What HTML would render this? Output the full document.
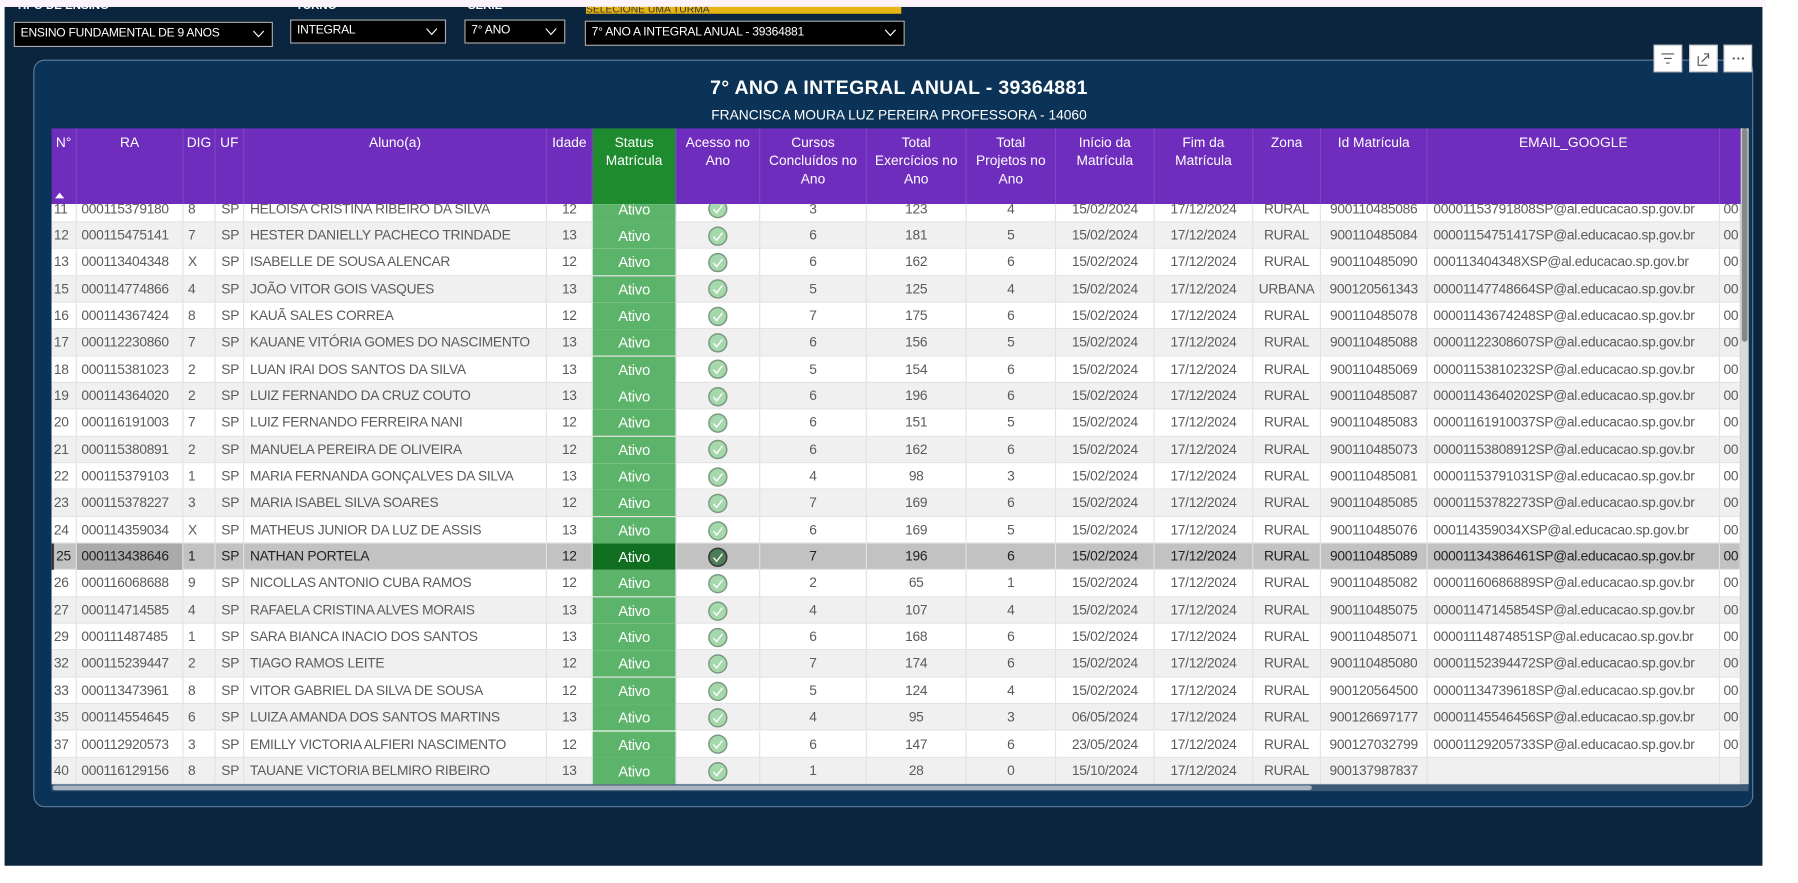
<!DOCTYPE html>
<html><head><meta charset="utf-8">
<style>
html,body{margin:0;padding:0;width:1798px;height:883px;overflow:hidden;background:#fff;}
#w{position:absolute;left:0;top:0;width:1568px;height:770px;transform:scale(1.14668);transform-origin:0 0;font-family:"Liberation Sans",sans-serif;}
.bg{position:absolute;left:4px;top:6px;width:1533px;height:749px;background:#0b253f;}
.topstrip{position:absolute;left:0;top:0;width:1540px;height:6px;background:#fcf4fa;}
.lbl{position:absolute;top:0px;color:#fff;font-size:10px;font-weight:bold;line-height:12px;}
.sl{position:absolute;background:#000;border:1px solid #aaa;color:#fff;font-size:10.5px;box-sizing:border-box;padding:3px 5px;white-space:nowrap;letter-spacing:-0.2px;}
.sl svg{position:absolute;right:6px;top:6px;}
.panel{position:absolute;left:29px;top:52px;width:1500px;height:652px;background:#0b3357;border:1.5px solid #5d7d9c;border-radius:10px;box-sizing:border-box;}
.ib{position:absolute;top:39px;width:25px;height:24px;background:#fff;border:1px solid #ccc;box-sizing:border-box;}
.t1{position:absolute;left:0;width:1568px;top:67px;text-align:center;color:#fff;font-size:17px;font-weight:bold;letter-spacing:0.3px;}
.t2{position:absolute;left:0;width:1568px;top:93px;text-align:center;color:#fff;font-size:12px;}
.hdr{position:absolute;left:45px;top:112px;height:66px;width:1473px;background:#6f2dbd;}
.hc{position:absolute;top:0;height:66px;color:#fff;font-size:12px;text-align:center;line-height:16px;padding-top:4px;box-sizing:border-box;border-right:1px solid #7d46c5;}
.body{position:absolute;left:45px;top:178px;width:1473px;height:506px;overflow:hidden;background:#fff;}
.row{position:absolute;left:0;width:1473px;height:23.35px;border-bottom:1px solid #e3e3e3;box-sizing:border-box;}
.c{position:absolute;top:0;height:23px;line-height:23px;font-size:12px;color:#5a5a5a;white-space:nowrap;overflow:hidden;letter-spacing:-0.25px;border-right:1px solid #e2e2e2;box-sizing:border-box;}
.ctr{text-align:center;}
.st{background:#5cb36a;color:#fff;text-align:center;font-size:13px;}
.vs{position:absolute;left:1518px;top:112px;width:7px;height:572px;background:#d9d9d9;}
.vs div{position:absolute;left:1px;top:0;width:5px;height:186px;background:#888;border-radius:3px;}
.hs{position:absolute;left:45px;top:684px;width:1480px;height:6px;background:#3d5a76;}
.hs div{position:absolute;left:1px;top:1px;width:1098px;height:4px;background:#a8b4c0;border-radius:2px;}
</style></head><body><div id="w">
<div class="bg"></div>
<div class="lbl" style="left:14px">TIPO DE ENSINO</div>
<div class="lbl" style="left:258px">TURNO</div>
<div class="lbl" style="left:408px">SERIE</div>
<div class="topstrip"></div>
<div style="position:absolute;left:511px;top:6px;width:275px;height:6px;background:#e8b614;overflow:hidden;font-size:9px;line-height:4px;color:#333">SELECIONE UMA TURMA</div>
<div class="sl" style="left:12px;top:19px;width:226px;height:22px">ENSINO FUNDAMENTAL DE 9 ANOS<svg width="11" height="7"><path d="M1 1L5.5 6L10 1" stroke="#fff" fill="none"/></svg></div>
<div class="sl" style="left:253px;top:17px;width:136px;height:21px;padding-top:2px">INTEGRAL<svg width="11" height="7"><path d="M1 1L5.5 6L10 1" stroke="#fff" fill="none"/></svg></div>
<div class="sl" style="left:405px;top:17px;width:88px;height:21px;padding-top:2px">7° ANO<svg width="11" height="7"><path d="M1 1L5.5 6L10 1" stroke="#fff" fill="none"/></svg></div>
<div class="sl" style="left:510px;top:18px;width:279px;height:22px">7° ANO A INTEGRAL ANUAL - 39364881<svg width="11" height="7"><path d="M1 1L5.5 6L10 1" stroke="#fff" fill="none"/></svg></div>
<div class="panel"></div>
<div class="ib" style="left:1442px"><svg width="23" height="22"><path d="M6 7h11M8 11h7M10 15h3" stroke="#555" stroke-width="1"/></svg></div>
<div class="ib" style="left:1473px"><svg width="23" height="22"><path d="M7 9v8h8M10 14l6-6M12 7h4v4" stroke="#555" fill="none"/></svg></div>
<div class="ib" style="left:1503px"><svg width="23" height="22"><circle cx="8" cy="11" r="1" fill="#555"/><circle cx="12" cy="11" r="1" fill="#555"/><circle cx="16" cy="11" r="1" fill="#555"/></svg></div>
<div class="t1">7° ANO A INTEGRAL ANUAL - 39364881</div>
<div class="t2">FRANCISCA MOURA LUZ PEREIRA PROFESSORA - 14060</div>
<div class="hdr">
<div class="hc" style="left:0;width:22px">N°<div style="position:absolute;left:3px;top:56px;width:0;height:0;border-left:4px solid transparent;border-right:4px solid transparent;border-bottom:5px solid #fff"></div></div>
<div class="hc" style="left:22px;width:93px">RA</div>
<div class="hc" style="left:115px;width:28px">DIG</div>
<div class="hc" style="left:143px;width:25px;text-align:left;padding-left:4px">UF</div>
<div class="hc" style="left:168px;width:264px">Aluno(a)</div>
<div class="hc" style="left:432px;width:40px">Idade</div>
<div class="hc" style="left:472px;width:73px;background:#1e8c2e">Status<br>Matrícula</div>
<div class="hc" style="left:545px;width:73px">Acesso no<br>Ano</div>
<div class="hc" style="left:618px;width:93px">Cursos<br>Concluídos no<br>Ano</div>
<div class="hc" style="left:711px;width:87px">Total<br>Exercícios no<br>Ano</div>
<div class="hc" style="left:798px;width:78px">Total<br>Projetos no<br>Ano</div>
<div class="hc" style="left:876px;width:86px">Início da<br>Matrícula</div>
<div class="hc" style="left:962px;width:86px">Fim da<br>Matrícula</div>
<div class="hc" style="left:1048px;width:59px">Zona</div>
<div class="hc" style="left:1107px;width:93px">Id Matrícula</div>
<div class="hc" style="left:1200px;width:255px">EMAIL_GOOGLE</div>
</div>
<div class="body" id="tb"></div>
<div class="vs"><div style="top:0"></div></div>
<div class="hs"><div></div></div>
</div>
<script>
var d=[
["11","000115379180","8","HELOISA CRISTINA RIBEIRO DA SILVA","12","3","123","4","15/02/2024","RURAL","900110485086","00001153791808SP"],
["12","000115475141","7","HESTER DANIELLY PACHECO TRINDADE","13","6","181","5","15/02/2024","RURAL","900110485084","00001154751417SP"],
["13","000113404348","X","ISABELLE DE SOUSA ALENCAR","12","6","162","6","15/02/2024","RURAL","900110485090","000113404348XSP"],
["15","000114774866","4","JOÃO VITOR GOIS VASQUES","13","5","125","4","15/02/2024","URBANA","900120561343","00001147748664SP"],
["16","000114367424","8","KAUÃ SALES CORREA","12","7","175","6","15/02/2024","RURAL","900110485078","00001143674248SP"],
["17","000112230860","7","KAUANE VITÓRIA GOMES DO NASCIMENTO","13","6","156","5","15/02/2024","RURAL","900110485088","00001122308607SP"],
["18","000115381023","2","LUAN IRAI DOS SANTOS DA SILVA","13","5","154","6","15/02/2024","RURAL","900110485069","00001153810232SP"],
["19","000114364020","2","LUIZ FERNANDO DA CRUZ COUTO","13","6","196","6","15/02/2024","RURAL","900110485087","00001143640202SP"],
["20","000116191003","7","LUIZ FERNANDO FERREIRA NANI","12","6","151","5","15/02/2024","RURAL","900110485083","00001161910037SP"],
["21","000115380891","2","MANUELA PEREIRA DE OLIVEIRA","12","6","162","6","15/02/2024","RURAL","900110485073","00001153808912SP"],
["22","000115379103","1","MARIA FERNANDA GONÇALVES DA SILVA","13","4","98","3","15/02/2024","RURAL","900110485081","00001153791031SP"],
["23","000115378227","3","MARIA ISABEL SILVA SOARES","12","7","169","6","15/02/2024","RURAL","900110485085","00001153782273SP"],
["24","000114359034","X","MATHEUS JUNIOR DA LUZ DE ASSIS","13","6","169","5","15/02/2024","RURAL","900110485076","000114359034XSP"],
["25","000113438646","1","NATHAN PORTELA","12","7","196","6","15/02/2024","RURAL","900110485089","00001134386461SP"],
["26","000116068688","9","NICOLLAS ANTONIO CUBA RAMOS","12","2","65","1","15/02/2024","RURAL","900110485082","00001160686889SP"],
["27","000114714585","4","RAFAELA CRISTINA ALVES MORAIS","13","4","107","4","15/02/2024","RURAL","900110485075","00001147145854SP"],
["29","000111487485","1","SARA BIANCA INACIO DOS SANTOS","13","6","168","6","15/02/2024","RURAL","900110485071","00001114874851SP"],
["32","000115239447","2","TIAGO RAMOS LEITE","12","7","174","6","15/02/2024","RURAL","900110485080","00001152394472SP"],
["33","000113473961","8","VITOR GABRIEL DA SILVA DE SOUSA","12","5","124","4","15/02/2024","RURAL","900120564500","00001134739618SP"],
["35","000114554645","6","LUIZA AMANDA DOS SANTOS MARTINS","13","4","95","3","06/05/2024","RURAL","900126697177","00001145546456SP"],
["37","000112920573","3","EMILLY VICTORIA ALFIERI NASCIMENTO","12","6","147","6","23/05/2024","RURAL","900127032799","00001129205733SP"],
["40","000116129156","8","TAUANE VICTORIA BELMIRO RIBEIRO","13","1","28","0","15/10/2024","RURAL","900137987837",""]];
var h="";
function chk(sel){return '<svg width="18" height="18" style="vertical-align:middle"><circle cx="9" cy="9" r="7.8" fill="'+(sel?'#4c7d57':'#a6d8ae')+'" stroke="'+(sel?'#333':'#7a9a80')+'" stroke-width="1.3"/><path d="M5.2 9.3l2.8 3.2 5-6.6" stroke="#fff" stroke-width="1.2" fill="none"/></svg>';}
d.forEach(function(r,i){
var top=-7.5+i*23.35, sel=r[0]=="25", bg=sel?"#c2c2c2":(i%2==1?"#f0f0f0":"#fff");
var col=sel?"#222":"#5a5a5a";
h+='<div class="row" style="top:'+top+'px;background:'+bg+'">';
function c(l,w,t,cl,ex){h+='<div class="c '+(cl||'')+'" style="left:'+l+'px;width:'+w+'px;color:'+col+';'+(ex||'')+'">'+t+'</div>';}
c(0,22,r[0],"","padding-left:2px;"+(sel?"border-left:2px solid #333":""));
c(22,93,r[1],"","padding-left:4px;"+(sel?"background:#aaa":""));
c(115,28,r[2],"","padding-left:4px");
c(143,25,"SP","","padding-left:5px");
c(168,264,r[3],"","padding-left:5px");
c(432,40,r[4],"ctr");
h+='<div class="c st" style="left:472px;width:73px;'+(sel?'background:#0f6e1f':'')+'">Ativo</div>';
c(545,73,chk(sel),"ctr");
c(618,93,r[5],"ctr");c(711,87,r[6],"ctr");c(798,78,r[7],"ctr");
c(876,86,r[8],"ctr");c(962,86,"17/12/2024","ctr");c(1048,59,r[9],"ctr");
c(1107,93,r[10],"ctr");
c(1200,255,r[11]?r[11]+"@al.educacao.sp.gov.br":"","","padding-left:5px");
c(1455,18,r[11]?"00":"","","padding-left:3px");
h+='</div>';});
document.getElementById("tb").innerHTML=h;
</script>
</body></html>
